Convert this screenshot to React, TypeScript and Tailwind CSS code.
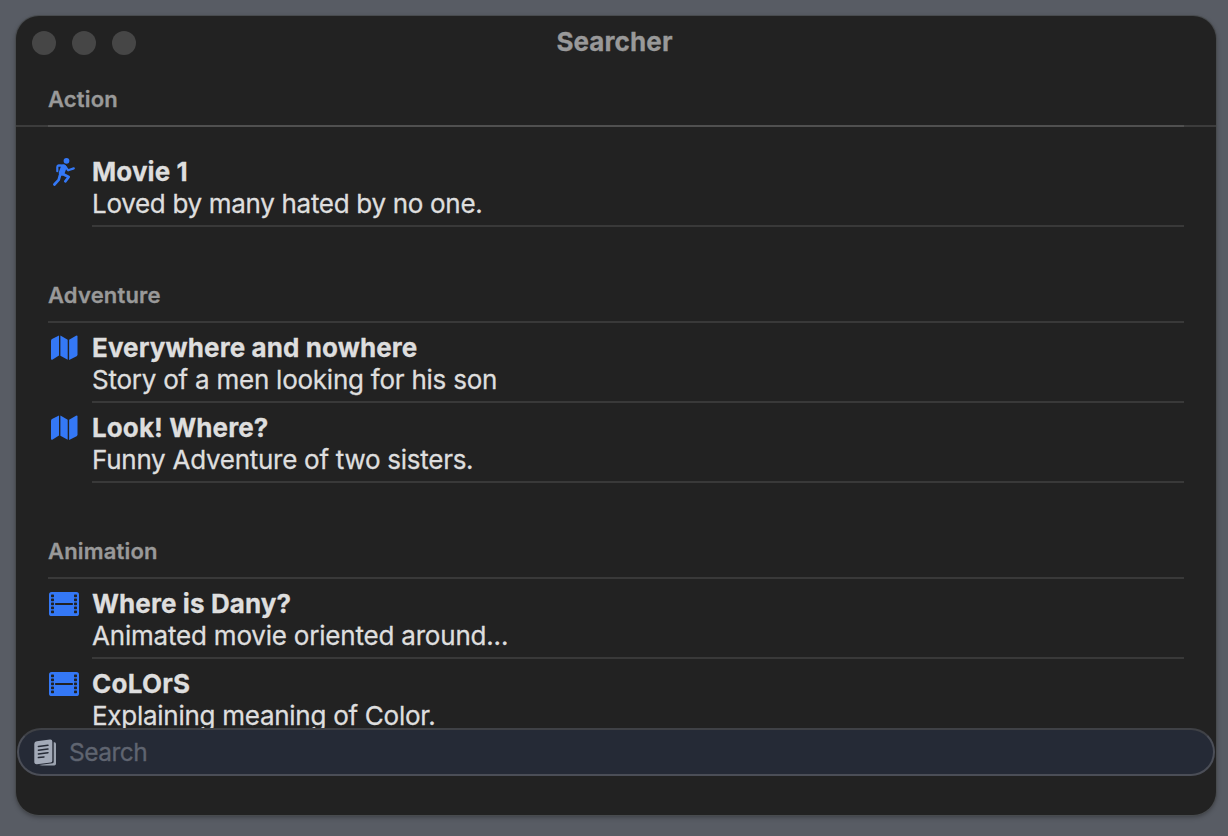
import React from "react";

type Kind = "run" | "map" | "film";

function RunIcon() {
  return (
    <svg width="28" height="32" viewBox="0 0 28 32" fill="none" stroke="#3478f6" strokeLinecap="round" strokeLinejoin="round">
      <circle cx="16.5" cy="4.8" r="2.9" fill="#3478f6" stroke="none" />
      <path d="M7.3 15.2V11Q7.4 9.5 8.8 9.3L14 9.6" strokeWidth="2.2" />
      <path d="M13.6 11.5L11.7 16.8" strokeWidth="5.8" />
      <path d="M15.4 10.6L18.2 14.3L23.8 12.4" strokeWidth="2.2" />
      <path d="M12.4 17.8L18.7 21L15.3 25.3" strokeWidth="2.7" />
      <path d="M10 19.2L8.7 23.8L4.4 28.5" strokeWidth="2.7" />
    </svg>
  );
}

function MapIcon() {
  return (
    <svg width="28" height="32" viewBox="0 0 28 32" fill="#3478f6">
      <path d="M9 3.5V23.6L2.3 27.7Q1 28.2 1 26.8V8.5Q1 7.5 2 6.9Z" />
      <path d="M10.4 3.5L17.7 7.8V27.8L10.4 23.7Z" />
      <path d="M19.1 7.8L26 3.7Q27.5 3 27.5 4.6V22.6Q27.5 23.6 26.6 24.2L19.1 28Z" />
    </svg>
  );
}

function FilmIcon() {
  const holes = [4.9, 8.9, 12.9, 16.9, 20.9];
  return (
    <svg width="30" height="26" viewBox="0 0 30 26">
      <rect x="0" y="1" width="30" height="24" rx="2.6" fill="#3478f6" />
      {holes.map((y) => (
        <g key={y} fill="#222222">
          <rect x="2" y={y - 1.4} width="3" height="2.7" rx="0.7" />
          <rect x="25" y={y - 1.4} width="3" height="2.7" rx="0.7" />
        </g>
      ))}
      <rect x="6" y="12" width="18" height="2" rx="0.8" fill="#222222" />
    </svg>
  );
}

function NotesIcon() {
  return (
    <svg width="24" height="28" viewBox="0 0 24 28">
      <path d="M5 25.9L18.6 24.2Q19.7 24 19.7 22.8V3.3L20.5 3.3Q22 3.4 22 5V24.8Q22 26.5 20.3 26.5L8 26.5Z" fill="#9ca3af" />
      <path d="M2.8 2.3L16 0.6Q18.3 0.4 18.3 2.4V21.7Q18.3 23.2 16.8 23.4L3 25.3Q0.5 25.6 0.3 23.2V4.8Q0.3 2.6 2.8 2.3Z" fill="#a3aab8" />
      <path d="M4.4 7.5L14 6.3M4.4 11.2L14 10M4.4 14.9L14 13.7M4.4 18.6L10 17.9" stroke="#252a36" strokeWidth="1.5" strokeLinecap="round" />
    </svg>
  );
}

interface RowProps {
  kind: Kind;
  title: string;
  text: string;
  titleClass?: string;
  textClass?: string;
  last?: boolean;
}

function Row({ kind, title, text, titleClass = "tracking-[0.1px]", textClass = "tracking-[-0.27px]", last }: RowProps) {
  return (
    <div className="flex h-20 shrink-0">
      <div className="flex h-[50px] w-11 shrink-0 items-center">
        {kind === "run" && <span className="ml-[2px]"><RunIcon /></span>}
        {kind === "map" && <span className="ml-[2px]"><MapIcon /></span>}
        {kind === "film" && <span className="ml-px"><FilmIcon /></span>}
      </div>
      <div className={`flex-1 border-b-2 pt-[9px] text-[26px] leading-8 whitespace-nowrap text-[#dedede] ${last ? "border-transparent" : "border-[#393939]"}`}>
        <div className={`font-bold [-webkit-text-stroke:0.3px] ${titleClass}`}>{title}</div>
        <div className={`[-webkit-text-stroke:0.3px] ${textClass}`}>{text}</div>
      </div>
    </div>
  );
}

function Heading({ children }: { children: string }) {
  return (
    <div className="mt-[39px] flex h-[57px] shrink-0 items-center border-b-2 border-[#393939] pt-[2px] text-[22px] leading-8 font-semibold tracking-[0.18px] text-[#999999] [-webkit-text-stroke:0.3px]">
      {children}
    </div>
  );
}

export default function App() {
  return (
    <div className="h-[836px] w-[1228px] overflow-hidden bg-[#585c64] pt-4 pl-4 font-['Inter','Liberation_Sans',sans-serif]">
      <main className="flex h-[799px] w-[1200px] flex-col overflow-hidden rounded-[23px] bg-[#222222] shadow-[0_0_0_1px_#484b4e,0_2px_5px_rgba(0,0,0,0.35)]">
        <header className="h-[111px] shrink-0 border-b-2 border-[#3c3c3c]">
          <div className="grid h-[54px] grid-cols-[1fr_auto_1fr] items-center">
            <div className="flex gap-4 pl-4">
              <i className="size-6 rounded-full bg-[#464646]" />
              <i className="size-6 rounded-full bg-[#464646]" />
              <i className="size-6 rounded-full bg-[#464646]" />
            </div>
            <h1 className="pr-[3px] pb-[2px] text-[26px] leading-8 font-bold tracking-[0.1px] text-[#999999] [-webkit-text-stroke:0.3px]">Searcher</h1>
          </div>
          <div className="mx-8 flex h-[57px] items-center border-b-2 border-[#505050] pt-[2px] text-[22px] leading-8 font-semibold tracking-[0.18px] text-[#999999] [-webkit-text-stroke:0.3px]">
            Action
          </div>
        </header>
        <section className="flex h-[602px] shrink-0 flex-col px-8 pt-5">
          <Row kind="run" title="Movie 1" text="Loved by many hated by no one." textClass="tracking-[-0.31px]" />
          <Heading>Adventure</Heading>
          <Row kind="map" title="Everywhere and nowhere" text="Story of a men looking for his son" textClass="tracking-[-0.24px]" />
          <Row kind="map" title="Look! Where?" text="Funny Adventure of two sisters." />
          <Heading>Animation</Heading>
          <Row kind="film" title="Where is Dany?" text="Animated movie oriented around..." textClass="tracking-[-0.2px]" />
          <Row kind="film" title="CoLOrS" text="Explaining meaning of Color." titleClass="tracking-[0.25px]" last />
        </section>
        <label className="relative z-10 mx-px -mt-px flex h-[48px] shrink-0 items-center rounded-full border-2 border-[#4b4e57] border-t-[#3f4146] bg-[#252a36] pl-[15px] text-[#5f6470]">
          <span className="pt-[2px]"><NotesIcon /></span>
          <span className="ml-[11px] text-[24.5px] leading-8 tracking-[-0.5px] [-webkit-text-stroke:0.3px]">Search</span>
        </label>
      </main>
    </div>
  );
}
